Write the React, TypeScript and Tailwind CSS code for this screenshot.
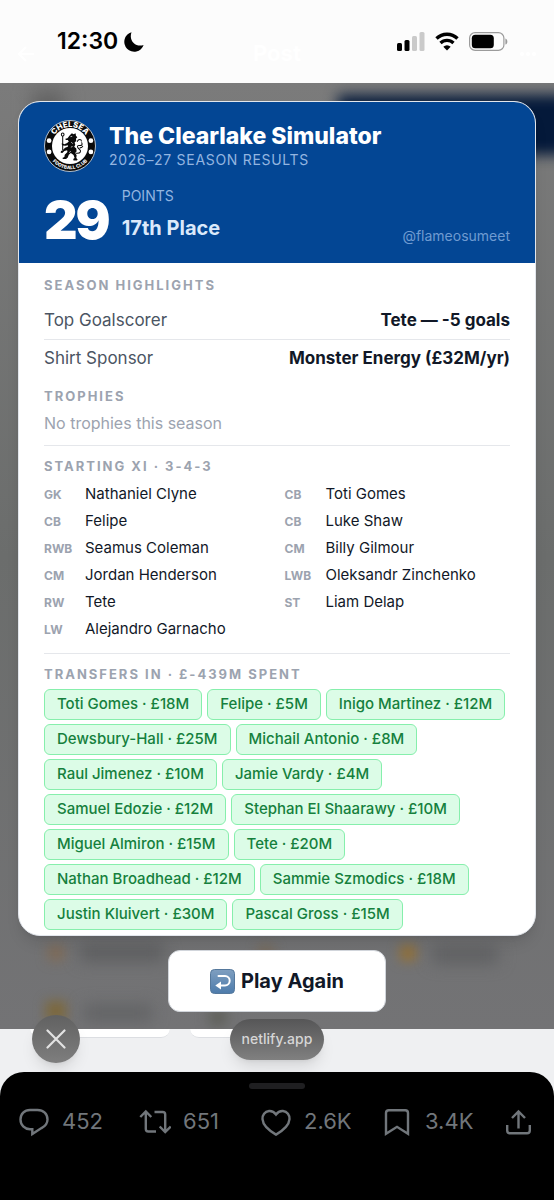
import type { ReactNode } from "react";

type Player = { pos: string; name: string };

const squad: Player[] = [
  { pos: "GK", name: "Nathaniel Clyne" },
  { pos: "CB", name: "Toti Gomes" },
  { pos: "CB", name: "Felipe" },
  { pos: "CB", name: "Luke Shaw" },
  { pos: "RWB", name: "Seamus Coleman" },
  { pos: "CM", name: "Billy Gilmour" },
  { pos: "CM", name: "Jordan Henderson" },
  { pos: "LWB", name: "Oleksandr Zinchenko" },
  { pos: "RW", name: "Tete" },
  { pos: "ST", name: "Liam Delap" },
  { pos: "LW", name: "Alejandro Garnacho" },
];

const transfers = [
  "Toti Gomes · £18M",
  "Felipe · £5M",
  "Inigo Martinez · £12M",
  "Dewsbury-Hall · £25M",
  "Michail Antonio · £8M",
  "Raul Jimenez · £10M",
  "Jamie Vardy · £4M",
  "Samuel Edozie · £12M",
  "Stephan El Shaarawy · £10M",
  "Miguel Almiron · £15M",
  "Tete · £20M",
  "Nathan Broadhead · £12M",
  "Sammie Szmodics · £18M",
  "Justin Kluivert · £30M",
  "Pascal Gross · £15M",
];

function ClubBadge() {
  return (
    <svg viewBox="0 0 153 153" className="h-[52px] w-[52px] shrink-0" role="img" aria-label="Chelsea Football Club">
      <defs>
        <path id="badge-top" d="M21 76a55 55 0 0 1 111 0" />
        <path id="badge-bottom" d="M8 76a68 68 0 0 0 137 0" />
      </defs>
      <circle cx="76.5" cy="76.5" r="75" fill="#0a0a0a" stroke="#d5dbe3" strokeWidth="2.5" />
      <circle cx="76.5" cy="76.5" r="53" fill="#fff" />
      <text fontFamily="Inter, sans-serif" fontSize="23" fontWeight="800" fill="#fff" textAnchor="middle">
        <textPath href="#badge-top" startOffset="50%">CHELSEA</textPath>
      </text>
      <text fontFamily="Inter, sans-serif" fontSize="14" fontWeight="800" fill="#fff" textAnchor="middle">
        <textPath href="#badge-bottom" startOffset="50%">FOOTBALL CLUB</textPath>
      </text>
      <circle cx="15" cy="61" r="7" fill="#fff" />
      <circle cx="15" cy="94" r="7" fill="#fff" />
      <circle cx="138" cy="61" r="7" fill="#fff" />
      <circle cx="138" cy="94" r="7" fill="#fff" />
      {/* lion rampant with staff */}
      <path d="M55 46v42M51 43c0-6 8-6 8 0s-8 6-8 0" fill="none" stroke="#0a0a0a" strokeWidth="3" />
      <path
        d="M76 45l6-6 5 3 6-3 1 7 4 5-4 4 1 7-5 4 2 7-3 6 6 5 1 8-4 5 4 7-1 8 4 4-2 3h-10l-1-4 4-3-3-9-8-6-6 5-3 8-5 5h-9l-2-3 6-3 1-7 8-8-1-5-8 2-6 6-5-1 1-5 4-1 8-8 8-3 1-5-8 2-8-1-4-5 4-1 5 2 8-3 5-5-3-4-6 0-1-4 6-1z"
        fill="#0a0a0a"
      />
      <path
        d="M95 98c14 1 15-7 9-12-8-6-7-12 1-11 6 1 9-3 6-8M98 63c3-8 12-7 12-1M106 82c4 0 7-2 8-5"
        fill="none"
        stroke="#0a0a0a"
        strokeWidth="3"
        strokeLinecap="round"
      />
      <path d="M78 49l5-1M80 65l5 5M79 80l5-2M74 96l5-4" stroke="#fff" strokeWidth="2" />
    </svg>
  );
}

function StatusBar() {
  return (
    <header className="relative flex h-[83px] items-center justify-between bg-[#fcfcfc] pr-[46px] pl-[57px] text-black">
      {/* washed-out title bar under the status icons */}
      <div className="absolute inset-0 flex items-center justify-between px-[18px] pt-6 text-[22px] font-bold text-white">
        <svg viewBox="0 0 16 16" className="h-4 w-4" fill="none" stroke="currentColor" strokeWidth="2" aria-hidden="true">
          <path d="M16 8H1m7-7L1 8l7 7" />
        </svg>
        Post
        <svg viewBox="0 0 16 16" className="h-4 w-4" fill="currentColor" aria-hidden="true">
          <circle cx="2" cy="8" r="2" />
          <circle cx="8" cy="8" r="2" />
          <circle cx="14" cy="8" r="2" />
        </svg>
      </div>
      <div className="relative flex items-center gap-1.5">
        <span className="text-[23px] font-semibold">12:30</span>
        <svg viewBox="0 0 20 20" className="h-5 w-5" aria-hidden="true">
          <path d="M7.500 .3A9.900 9.900 0 1 0 19.600 12.900C13 15.800 4.200 9.500 7.500 .3Z" fill="currentColor" />
        </svg>
      </div>
      <div className="relative flex items-center gap-2.5">
        <svg viewBox="0 0 28 19" className="h-[19px] w-7" aria-hidden="true">
          <rect x="0" y="11" width="5" height="8" rx="1.500" />
          <rect x="7.500" y="8" width="5" height="11" rx="1.500" />
          <rect x="15" y="4" width="5" height="15" rx="1.500" fill="#cacaca" />
          <rect x="22.500" y="0" width="5" height="19" rx="1.500" fill="#cacaca" />
        </svg>
        <svg viewBox="0 0 24 19" className="h-[19px] w-6" fill="none" stroke="currentColor" aria-hidden="true">
          <path d="M1.500 6.500a15 15 0 0 1 21 0" strokeWidth="3.400" />
          <path d="M5.500 11a9.200 9.200 0 0 1 13 0" strokeWidth="3.200" />
          <path d="M12 18.500 8.300 14.700a5.300 5.300 0 0 1 7.400 0Z" fill="currentColor" stroke="none" />
        </svg>
        <svg viewBox="0 0 39 19" className="h-[19px] w-[39px]" aria-hidden="true">
          <rect x=".6" y=".6" width="34.300" height="17.800" rx="5.500" fill="none" stroke="#9b9b9b" strokeWidth="1.200" />
          <rect x="2.800" y="2.800" width="22" height="13.400" rx="3.500" />
          <path d="M36.400 6.400c2.600 1.200 2.600 5 0 6.200Z" fill="#9b9b9b" />
        </svg>
      </div>
    </header>
  );
}

function SectionTitle({ children }: { children: ReactNode }) {
  return <h2 className="text-[13px] leading-5 font-bold tracking-[2px] text-[#9ca3af]">{children}</h2>;
}

function HighlightRow({ label, value }: { label: string; value: string }) {
  return (
    <div className="flex h-[38px] items-center justify-between text-[17px]">
      <dt className="text-[#4b5563]">{label}</dt>
      <dd className="font-bold text-[#111827]">{value}</dd>
    </div>
  );
}

function ResultsCard() {
  return (
    <section className="relative overflow-hidden rounded-[22px] border border-[#e2e6ec] bg-white shadow-lg">
      <div className="bg-[#034694] px-[25px] pt-[18px] pb-[17px]">
        <div className="flex items-center gap-[13px]">
          <ClubBadge />
          <div>
            <h1 className="text-[23px] leading-7 font-extrabold text-white">The Clearlake Simulator</h1>
            <p className="text-sm leading-5 tracking-wider text-[#93b5e0]">2026–27 SEASON RESULTS</p>
          </div>
        </div>
        <div className="mt-[14px] flex items-end">
          <span className="text-[52px] leading-[50px] font-black tracking-[-2px] text-white">29</span>
          <div className="ml-[13px] pb-1">
            <p className="text-sm leading-5 text-[#93b5e0]">POINTS</p>
            <p className="mt-2 text-xl leading-7 font-bold text-[#dbe9fb]">17th Place</p>
          </div>
          <span className="ml-auto text-sm leading-5 text-[#6f9bd1]">@flameosumeet</span>
        </div>
      </div>

      <div className="px-[25px] pt-3 pb-[5px]">
        <SectionTitle>SEASON HIGHLIGHTS</SectionTitle>
        <dl className="mt-[7px] divide-y divide-[#e5e7eb]">
          <HighlightRow label="Top Goalscorer" value="Tete — -5 goals" />
          <HighlightRow label="Shirt Sponsor" value="Monster Energy (£32M/yr)" />
        </dl>

        <div className="mt-2 border-b border-[#e5e7eb] pb-2.5">
          <SectionTitle>TROPHIES</SectionTitle>
          <p className="mt-[5px] text-base text-[#9ca3af]">No trophies this season</p>
        </div>

        <div className="mt-2.5 border-b border-[#e5e7eb] pb-2.5">
          <SectionTitle>STARTING XI · 3-4-3</SectionTitle>
          <ul className="mt-[5px] grid grid-cols-2 gap-x-[15px]">
            {squad.map((p) => (
              <li key={p.name} className="flex h-[27px] items-center">
                <span className="w-[41px] shrink-0 text-xs font-bold text-[#9ca3af]">{p.pos}</span>
                <span className="text-[15px] text-[#111827]">{p.name}</span>
              </li>
            ))}
          </ul>
        </div>

        <div className="mt-2.5">
          <SectionTitle>TRANSFERS IN · £-439M SPENT</SectionTitle>
          <ul className="mt-[5px] flex flex-wrap gap-x-[5px] gap-y-1">
            {transfers.map((t) => (
              <li
                key={t}
                className="flex h-[31px] items-center rounded-md border border-[#86efac] bg-[#dcfce7] px-3 text-[15px] font-medium text-[#15803d]"
              >
                {t}
              </li>
            ))}
          </ul>
        </div>
      </div>
    </section>
  );
}

function ReturnIcon() {
  return (
    <svg viewBox="0 0 25 25" className="h-[25px] w-[25px]" aria-hidden="true">
      <defs>
        <linearGradient id="key" x1="0" y1="0" x2="0" y2="1">
          <stop offset="0" stopColor="#7f9fc0" />
          <stop offset="1" stopColor="#4d7bab" />
        </linearGradient>
      </defs>
      <rect x=".5" y=".5" width="24" height="24" rx="4" fill="url(#key)" stroke="#55789c" />
      <path d="M8.500 7h6.500a4.700 4.700 0 0 1 0 9.400H10" fill="none" stroke="#fff" strokeWidth="2" strokeLinecap="round" />
      <path d="M11 12.400v8L5.300 16.400Z" fill="#fff" />
    </svg>
  );
}

// Dimmed page contents showing through the backdrop
function Backdrop() {
  return (
    <div className="absolute inset-0 overflow-hidden" aria-hidden="true">
      <div className="absolute top-3 -right-6 h-[60px] w-[240px] bg-[#04193a] blur-[7px]" />
      <div className="absolute top-2 left-8 h-8 w-8 bg-[#626262] blur-[9px]" />
      <div className="absolute bottom-[70px] left-[50px] h-3 w-3 bg-[#8a6540] blur-[7px]" />
      <div className="absolute bottom-[68px] left-[80px] h-4 w-[84px] bg-[#5c5d5f] blur-[8px]" />
      <div className="absolute bottom-[70px] left-[260px] h-3 w-3 bg-[#7c6446] blur-[7px]" />
      <div className="absolute right-[138px] bottom-[68px] h-4 w-4 bg-[#927038] blur-[6px]" />
      <div className="absolute right-[56px] bottom-[66px] h-4 w-[66px] bg-[#5e5f61] blur-[8px]" />
      <div className="absolute bottom-2 left-[46px] h-5 w-5 bg-[#7d683c] blur-[6px]" />
      <div className="absolute bottom-2 left-[84px] h-4 w-[68px] bg-[#616264] blur-[8px]" />
      <div className="absolute bottom-1 left-[210px] h-4 w-4 bg-[#5a5b53] blur-[7px]" />
    </div>
  );
}

const iconProps = {
  viewBox: "0 0 32 32",
  className: "h-8 w-8 shrink-0",
  fill: "none",
  stroke: "currentColor",
  strokeWidth: 2.4,
  "aria-hidden": true,
} as const;

function PostActions() {
  return (
    <div className="grid grid-cols-[1fr_1fr_1fr_1fr_32px] pt-4 pr-5 pl-[18px] text-[22px] text-[#71767b]">
      <button type="button" aria-label="Replies" className="flex items-center gap-3">
        <svg {...iconProps}>
          <path d="M12 4h7.500C25.500 4 29.500 8 29.500 13.500c0 4-2.500 6.800-6 8.600L14.300 28v-4.800H12C6.500 23 2.500 19 2.500 13.500S6.500 4 12 4Z" />
        </svg>
        452
      </button>
      <button type="button" aria-label="Reposts" className="flex items-center gap-3">
        <svg {...iconProps}>
          <path d="M6.800 6v17c0 1.600 1 2.500 2.500 2.500H17M1.300 11l5.500-5.500 5.500 5.500M15.500 6h8.200c1.600 0 2.500 1 2.500 2.500v17M20.700 20.500l5.500 5.500 5.500-5.500" />
        </svg>
        651
      </button>
      <button type="button" aria-label="Likes" className="flex items-center gap-3">
        <svg {...iconProps}>
          <path d="M16 8.500C14 5.700 11.500 4.800 9 5c-4.200.4-6.800 4-6.500 8.200C2.900 19 8.500 24.300 16 28.600c7.500-4.300 13.100-9.600 13.500-15.400.3-4.200-2.300-7.800-6.500-8.200-2.500-.2-5 .7-7 3.500Z" />
        </svg>
        2.6K
      </button>
      <button type="button" aria-label="Bookmarks" className="flex items-center gap-3">
        <svg {...iconProps}>
          <path d="M5 7c0-1.800 1-2.800 2.800-2.800h16.400C26 4.200 27 5.200 27 7v20.800l-11-7-11 7Z" />
        </svg>
        3.4K
      </button>
      <button type="button" aria-label="Share">
        <svg {...iconProps}>
          <path d="M16.500 22.500V5.500M10 12l6.500-6.500L23 12M5.200 19v5.500c0 1.800 1 2.800 2.800 2.800h17c1.800 0 2.800-1 2.800-2.800V19" />
        </svg>
      </button>
    </div>
  );
}

export default function App() {
  return (
    <div className="flex min-h-screen flex-col bg-black font-['Inter',sans-serif]">
      <StatusBar />

      <main className="relative bg-linear-to-b from-[#7b7b7b] via-[#6b6d6c] to-[#737375] px-[18px] pt-[18px] pb-[17px]">
        <Backdrop />
        <ResultsCard />
        <div className="relative mt-[14px] flex justify-center">
          <button
            type="button"
            className="flex h-[62px] items-center gap-1.5 rounded-xl border border-[#d1d5db] bg-white px-[41px] text-xl font-bold text-[#111827]"
          >
            <ReturnIcon />
            Play Again
          </button>
        </div>
      </main>

      <div className="bg-[#eff0f2]">
        <div className="relative h-[43px]">
          <div className="flex gap-5 pl-[30px]" aria-hidden="true">
            <div className="h-[9px] w-[140px] rounded-b-[14px] border-b border-[#dcdee2] bg-white" />
            <div className="h-[9px] w-[90px] rounded-b-[14px] border-b border-[#dcdee2] bg-white" />
          </div>
          {/* floating browser controls */}
          <div className="absolute inset-x-0 -top-[14px] flex h-12 items-center justify-center">
            <button
              type="button"
              aria-label="Close"
              className="absolute left-8 flex h-12 w-12 items-center justify-center rounded-full bg-linear-to-b from-[#616161] to-[#7e7e7e] text-[#e2e2e2] shadow-lg"
            >
              <svg viewBox="0 0 20 20" className="h-5 w-5" stroke="currentColor" strokeWidth="2.200" strokeLinecap="round">
                <path d="m1.500 1.500 17 17m0-17-17 17" />
              </svg>
            </button>
            <button
              type="button"
              className="h-[41px] rounded-full bg-linear-to-b from-[#565657] to-[#808080] px-3 text-sm font-medium text-[#d6d6d6] shadow-lg"
            >
              netlify.app
            </button>
          </div>
        </div>
        <footer className="h-32 rounded-t-[24px] bg-black pt-[11px]">
          <div className="mx-auto h-1.5 w-14 rounded-full bg-[#1f1f21]" />
          <PostActions />
        </footer>
      </div>
    </div>
  );
}
